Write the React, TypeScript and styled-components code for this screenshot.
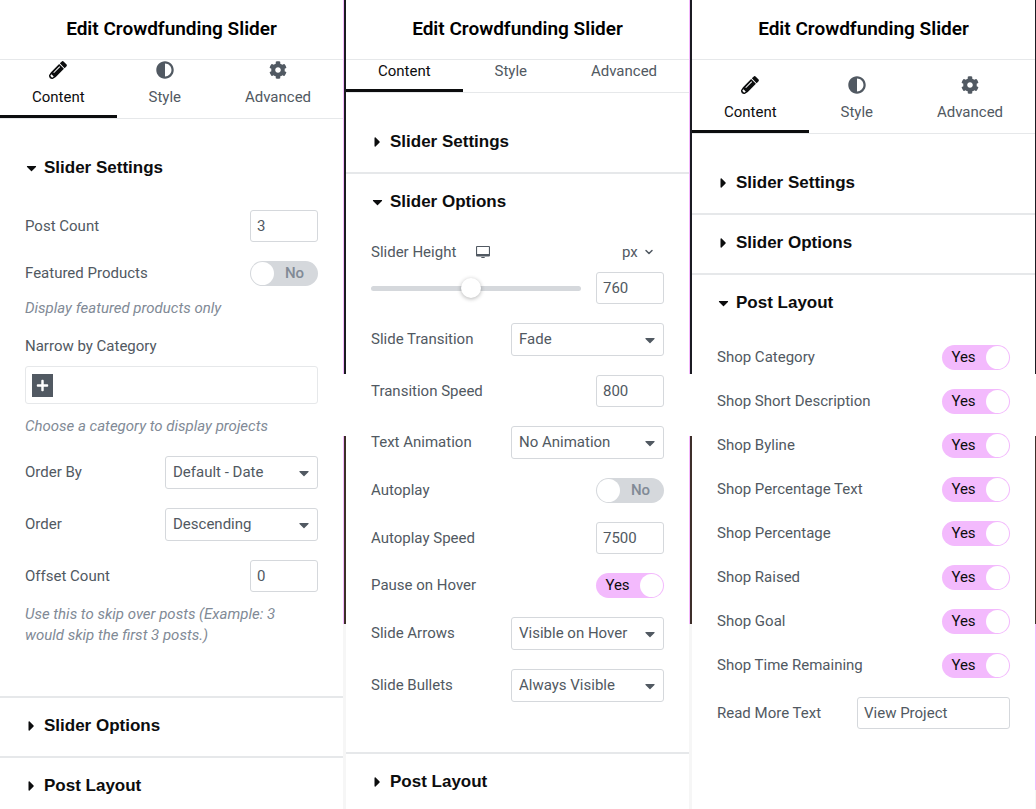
import React, { useId, useState } from "react";
import styled, { createGlobalStyle } from "styled-components";
import { FaAdjust, FaCaretDown, FaCaretRight, FaCog, FaPlus } from "react-icons/fa";
import { ChevronDown } from "lucide-react";

const ink = "#0c0d0e";
const text = "#515962";
const muted = "#818a96";
const line = "#d5d8dc";
const divider = "#e6e8ea";
const pink = "#f3bafd";

const GlobalStyle = createGlobalStyle`
  *, *::before, *::after { box-sizing: border-box; }
  body {
    margin: 0;
    background: #fff;
    color: ${text};
    font: 15px/16px Roboto, "Liberation Sans", sans-serif;
  }
  button, input, select { font: inherit; color: inherit; margin: 0; }
`;

const Page = styled.main`
  display: grid;
  grid-template-columns: 1fr 3px 1fr 3px 1fr 1px;
  height: 100vh;
  overflow: hidden;
`;

const Panel = styled.section`
  display: flex;
  flex-direction: column;
  min-width: 0;
  min-height: 0;
  background: #fff;
`;

const PanelHeader = styled.header`
  display: flex;
  align-items: center;
  justify-content: center;
  flex: none;
  height: 60px;
  padding-bottom: 2px;
  border-bottom: 1px solid ${divider};
`;

const PanelTitle = styled.h1`
  margin: 0;
  color: #000;
  font-size: 19px;
  font-weight: 600;
  line-height: 24px;
`;

const ScrollArea = styled.div`
  flex: 1;
  min-height: 0;
  overflow: hidden;
`;

const Tabs = styled.nav<{ $scrolled: number }>`
  display: flex;
  margin-top: ${(p) => -p.$scrolled}px;
  border-bottom: 1px solid ${divider};
`;

const Tab = styled.button<{ $active?: boolean }>`
  display: flex;
  flex: 1 1 auto;
  flex-direction: column;
  align-items: center;
  gap: 10px;
  padding: 16px 0 10px;
  border: 0;
  border-bottom: 3px solid ${(p) => (p.$active ? ink : "transparent")};
  background: none;
  color: ${(p) => (p.$active ? ink : text)};
  cursor: pointer;

  svg { width: 18px; height: 18px; }
`;

const Sections = styled.div`
  padding-top: 21px;
`;

const SectionBlock = styled.div`
  border-bottom: 2px solid ${divider};
  &:last-child { border-bottom: 0; }
`;

const SectionHeading = styled.h2`
  margin: 0;
  font-family: "Liberation Sans", Arial, sans-serif;
  font-size: 17px;
  line-height: 20px;
`;

const SectionToggle = styled.button`
  display: flex;
  align-items: center;
  gap: 6px;
  width: 100%;
  height: 58px;
  padding: 0 25px 2px;
  border: 0;
  background: none;
  color: ${ink};
  font-weight: 700;
  cursor: pointer;

  svg { width: 13px; height: 16px; }
`;

const Fields = styled.div`
  display: flex;
  flex-direction: column;
  gap: 19px;
  padding: 12px 25px 50px;
`;

const Field = styled.div`
  display: flex;
  flex-direction: column;
  gap: 12px;
`;

const Row = styled.div`
  display: flex;
  align-items: center;
  justify-content: space-between;
  gap: 15px;
`;

const FieldLabel = styled.label`
  padding-bottom: 1px;
`;

const Description = styled.p`
  margin: 0;
  padding-right: 20px;
  color: ${muted};
  font-style: italic;
  line-height: 21px;
`;

const TextInput = styled.input<{ $wide?: boolean }>`
  flex: none;
  width: ${(p) => (p.$wide ? "153px" : "68px")};
  height: 32px;
  padding: 0 6px;
  border: 1px solid ${line};
  border-radius: 3px;
  background: #fff;
  appearance: textfield;
  outline: 0;

  &::-webkit-inner-spin-button { appearance: none; margin: 0; }
`;

const SelectShell = styled.span`
  display: grid;
  align-items: center;
  flex: none;
  width: 153px;

  > * { grid-area: 1 / 1; }
  > svg {
    justify-self: end;
    margin-right: 6px;
    width: 16px;
    height: 16px;
    pointer-events: none;
  }
`;

const SelectBox = styled.select`
  width: 100%;
  height: 33px;
  padding: 0 24px 2px 7px;
  border: 1px solid ${line};
  border-radius: 3px;
  background: #fff;
  appearance: none;
`;

const SwitchTrack = styled.label<{ $on: boolean }>`
  display: flex;
  flex: none;
  flex-direction: ${(p) => (p.$on ? "row" : "row-reverse")};
  align-items: center;
  width: 68px;
  height: 25px;
  padding: 0 1px;
  border-radius: 13px;
  background: ${(p) => (p.$on ? pink : line)};
  color: ${(p) => (p.$on ? ink : muted)};
  font-weight: ${(p) => (p.$on ? 400 : 500)};
  cursor: pointer;
`;

const SwitchInput = styled.input`
  position: absolute;
  opacity: 0;
  pointer-events: none;
`;

const SwitchText = styled.span`
  flex: 1;
  padding: 0 2px 1px 0;
  text-align: center;
`;

const SwitchKnob = styled.span`
  width: 23px;
  height: 23px;
  border-radius: 50%;
  background: #fff;
`;

const CategoryBox = styled.div`
  display: flex;
  align-items: center;
  height: 38px;
  padding: 0 6px;
  border: 1px solid ${divider};
  border-radius: 3px;
`;

const AddButton = styled.button`
  display: grid;
  place-items: center;
  width: 21px;
  height: 23px;
  padding: 0;
  border: 0;
  background: ${text};
  color: #fff;
  cursor: pointer;
`;

const ResponsiveLabel = styled.span`
  display: flex;
  align-items: center;
  gap: 20px;
  height: 16px;
`;

const IconButton = styled.button`
  display: flex;
  padding: 0;
  border: 0;
  background: none;
`;

const UnitPicker = styled.span`
  display: flex;
  align-items: center;
  gap: 5px;
  padding-right: 9px;
`;

const UnitSelect = styled.select`
  height: 16px;
  padding: 0;
  border: 0;
  background: none;
  appearance: none;
`;

const Range = styled.input`
  flex: 1;
  min-width: 0;
  height: 20px;
  background: none;
  appearance: none;

  &::-webkit-slider-runnable-track {
    height: 5px;
    border-radius: 3px;
    background: ${line};
  }
  &::-webkit-slider-thumb {
    appearance: none;
    width: 20px;
    height: 20px;
    margin-top: -8px;
    border-radius: 50%;
    background: #fff;
    box-shadow: 0 1px 4px rgba(0, 0, 0, 0.3);
  }
`;

/* Sliver of the live page preview that shows beside each panel. */
const Preview = styled.div`
  display: flex;
  flex-direction: column;
  min-width: 0;
`;

const PreviewPart = styled.div<{ $height?: number; $color: string; $outlined?: boolean }>`
  flex: ${(p) => (p.$height ? `0 0 ${p.$height}px` : "1")};
  border-left: ${(p) => (p.$outlined ? `1px solid ${pink}` : "0")};
  background: ${(p) => p.$color};
`;

function PreviewStrip({ last = false }: { last?: boolean }) {
  return (
    <Preview aria-hidden="true">
      <PreviewPart $height={374} $color="#1b1b22" $outlined={!last} />
      <PreviewPart $height={62} $color="#fff" />
      <PreviewPart $height={188} $color="#3e2f2a" $outlined={!last} />
      {last && <PreviewPart $height={166} $color={pink} />}
      <PreviewPart $color="#f6f6f6" />
    </Preview>
  );
}

function PencilIcon() {
  return (
    <svg viewBox="0 0 18 18" aria-hidden="true">
      <g transform="translate(9 9) rotate(-45)">
        <path
          fill="currentColor"
          fillRule="evenodd"
          d="M-11.500 0 -10.600-2.500 -6.500-3.400H5V3.400H-6.500L-10.600 2.500ZM-9.600-1.300V1.300L-7.600 1.600V-1.600ZM-5-1.600V-.6H3.600V-1.600Z"
        />
        <path fill="currentColor" d="M6-3.400H8.400A1.600 1.600 0 0 1 10-1.800V1.800A1.600 1.600 0 0 1 8.400 3.400H6Z" />
      </g>
    </svg>
  );
}

function DesktopIcon() {
  return (
    <svg width="14" height="12" viewBox="0 0 14 12" aria-hidden="true">
      <path
        fill={text}
        fillRule="evenodd"
        d="M1 0h12a1 1 0 0 1 1 1v8.400a1 1 0 0 1-1 1H1a1 1 0 0 1-1-1V1a1 1 0 0 1 1-1Zm.1 1.100v6.900h11.800V1.100Z"
      />
      <path fill={text} d="M5 11h4l-.6 1H5.600Z" />
    </svg>
  );
}

function NumberField({ label, value, note }: { label: string; value: number; note?: string }) {
  const id = useId();
  return (
    <Field>
      <Row>
        <FieldLabel htmlFor={id}>{label}</FieldLabel>
        <TextInput id={id} type="number" defaultValue={value} />
      </Row>
      {note && <Description>{note}</Description>}
    </Field>
  );
}

function SelectField({ label, options }: { label: string; options: string[] }) {
  const id = useId();
  return (
    <Row>
      <FieldLabel htmlFor={id}>{label}</FieldLabel>
      <SelectShell>
        <SelectBox id={id}>
          {options.map((o) => (
            <option key={o}>{o}</option>
          ))}
        </SelectBox>
        <FaCaretDown />
      </SelectShell>
    </Row>
  );
}

function SwitchField({ label, initial, note }: { label: string; initial: boolean; note?: string }) {
  const id = useId();
  const [on, setOn] = useState(initial);
  return (
    <Field>
      <Row>
        <FieldLabel htmlFor={id}>{label}</FieldLabel>
        <SwitchTrack $on={on}>
          <SwitchInput id={id} type="checkbox" checked={on} onChange={() => setOn(!on)} />
          <SwitchText>{on ? "Yes" : "No"}</SwitchText>
          <SwitchKnob />
        </SwitchTrack>
      </Row>
      {note && <Description>{note}</Description>}
    </Field>
  );
}

function CategoryField() {
  return (
    <Field role="group" aria-label="Narrow by Category">
      <span>Narrow by Category</span>
      <CategoryBox>
        <AddButton type="button" aria-label="Add category">
          <FaPlus size={13} />
        </AddButton>
      </CategoryBox>
      <Description>Choose a category to display projects</Description>
    </Field>
  );
}

function HeightField() {
  const id = useId();
  const [height, setHeight] = useState(760);
  return (
    <Field>
      <Row>
        <ResponsiveLabel>
          <FieldLabel htmlFor={id}>Slider Height</FieldLabel>
          <IconButton type="button" aria-label="Desktop">
            <DesktopIcon />
          </IconButton>
        </ResponsiveLabel>
        <UnitPicker>
          <UnitSelect aria-label="Unit">
            <option>px</option>
          </UnitSelect>
          <ChevronDown size={12} strokeWidth={3} />
        </UnitPicker>
      </Row>
      <Row>
        <Range
          type="range"
          aria-label="Slider Height"
          min={0}
          max={1600}
          value={height}
          onChange={(e) => setHeight(Number(e.target.value))}
        />
        <TextInput
          id={id}
          type="number"
          value={height}
          onChange={(e) => setHeight(Number(e.target.value))}
        />
      </Row>
    </Field>
  );
}

function SliderSettings() {
  return (
    <>
      <NumberField label="Post Count" value={3} />
      <SwitchField label="Featured Products" initial={false} note="Display featured products only" />
      <CategoryField />
      <SelectField label="Order By" options={["Default - Date", "Title"]} />
      <SelectField label="Order" options={["Descending", "Ascending"]} />
      <NumberField
        label="Offset Count"
        value={0}
        note="Use this to skip over posts (Example: 3 would skip the first 3 posts.)"
      />
    </>
  );
}

function SliderOptions() {
  return (
    <>
      <HeightField />
      <SelectField label="Slide Transition" options={["Fade", "Slide"]} />
      <NumberField label="Transition Speed" value={800} />
      <SelectField label="Text Animation" options={["No Animation"]} />
      <SwitchField label="Autoplay" initial={false} />
      <NumberField label="Autoplay Speed" value={7500} />
      <SwitchField label="Pause on Hover" initial />
      <SelectField label="Slide Arrows" options={["Visible on Hover", "Always Visible"]} />
      <SelectField label="Slide Bullets" options={["Always Visible", "Visible on Hover"]} />
    </>
  );
}

const shopParts = [
  "Category",
  "Short Description",
  "Byline",
  "Percentage Text",
  "Percentage",
  "Raised",
  "Goal",
  "Time Remaining",
];

function PostLayout() {
  const id = useId();
  return (
    <>
      {shopParts.map((part) => (
        <SwitchField key={part} label={`Shop ${part}`} initial />
      ))}
      <Row>
        <FieldLabel htmlFor={id}>Read More Text</FieldLabel>
        <TextInput id={id} $wide type="text" defaultValue="View Project" />
      </Row>
    </>
  );
}

const sections = [
  { title: "Slider Settings", Body: SliderSettings },
  { title: "Slider Options", Body: SliderOptions },
  { title: "Post Layout", Body: PostLayout },
];

function EditorPanel({ initial, scrolled }: { initial: string; scrolled: number }) {
  const [open, setOpen] = useState(initial);
  return (
    <Panel>
      <PanelHeader>
        <PanelTitle>Edit Crowdfunding Slider</PanelTitle>
      </PanelHeader>
      <ScrollArea>
        <Tabs $scrolled={scrolled}>
          <Tab type="button" $active>
            <PencilIcon />
            Content
          </Tab>
          <Tab type="button">
            <FaAdjust />
            Style
          </Tab>
          <Tab type="button">
            <FaCog />
            Advanced
          </Tab>
        </Tabs>
        <Sections>
          {sections.map(({ title, Body }) => {
            const expanded = open === title;
            return (
              <SectionBlock key={title}>
                <SectionHeading>
                  <SectionToggle
                    type="button"
                    aria-expanded={expanded}
                    onClick={() => setOpen(expanded ? "" : title)}
                  >
                    {expanded ? <FaCaretDown /> : <FaCaretRight />}
                    {title}
                  </SectionToggle>
                </SectionHeading>
                {expanded && (
                  <Fields>
                    <Body />
                  </Fields>
                )}
              </SectionBlock>
            );
          })}
        </Sections>
      </ScrollArea>
    </Panel>
  );
}

export default function App() {
  return (
    <>
      <GlobalStyle />
      <Page>
        <EditorPanel initial="Slider Settings" scrolled={15} />
        <PreviewStrip />
        <EditorPanel initial="Slider Options" scrolled={41} />
        <PreviewStrip />
        <EditorPanel initial="Post Layout" scrolled={0} />
        <PreviewStrip last />
      </Page>
    </>
  );
}
